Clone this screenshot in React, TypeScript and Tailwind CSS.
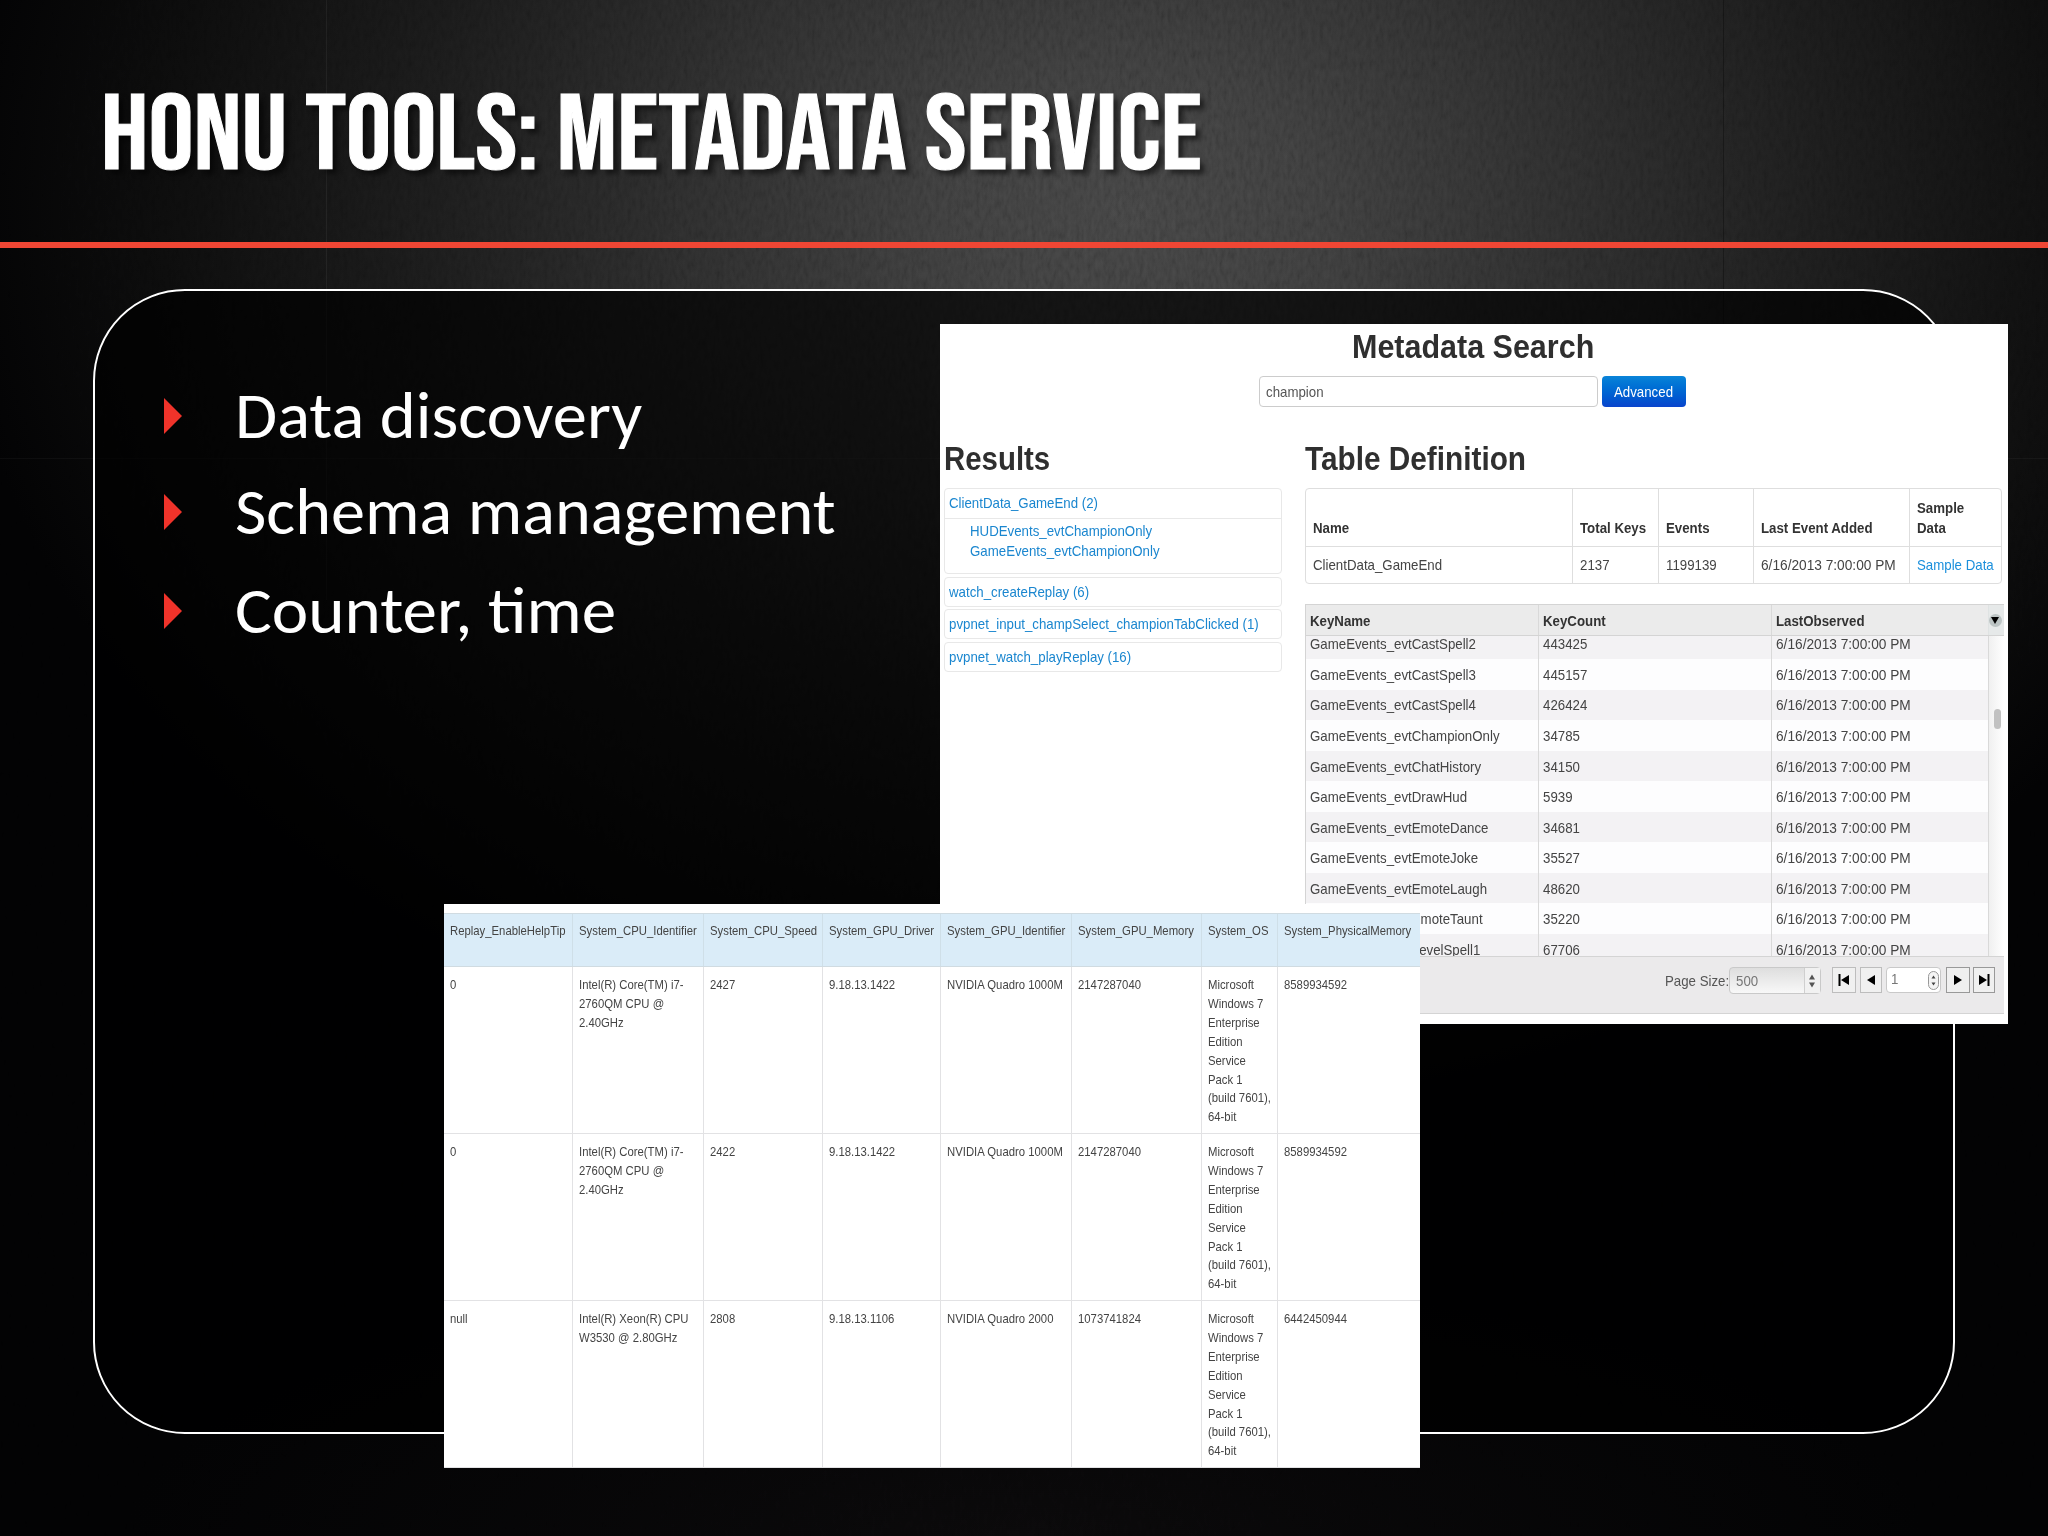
import { useLayoutEffect, useRef, useState } from "react";
import type { ReactNode } from "react";

type FitProps = {
    width: number;
    className?: string;
    children: ReactNode;
};

type KeyRow = {
    name: string;
    count: string;
};

const bullets = [
    { text: "Data discovery", width: 407, row: "h-[95px]" },
    { text: "Schema management", width: 601, row: "h-[98px]" },
    { text: "Counter, time", width: 381, row: "h-[100px]" },
];

const otherResults = [
    "watch_createReplay (6)",
    "pvpnet_input_champSelect_championTabClicked (1)",
    "pvpnet_watch_playReplay (16)",
];

const keyRows: KeyRow[] = [
    { name: "GameEvents_evtCastSpell2", count: "443425" },
    { name: "GameEvents_evtCastSpell3", count: "445157" },
    { name: "GameEvents_evtCastSpell4", count: "426424" },
    { name: "GameEvents_evtChampionOnly", count: "34785" },
    { name: "GameEvents_evtChatHistory", count: "34150" },
    { name: "GameEvents_evtDrawHud", count: "5939" },
    { name: "GameEvents_evtEmoteDance", count: "34681" },
    { name: "GameEvents_evtEmoteJoke", count: "35527" },
    { name: "GameEvents_evtEmoteLaugh", count: "48620" },
    { name: "GameEvents_evtEmoteTaunt", count: "35220" },
    { name: "GameEvents_evtLevelSpell1", count: "67706" },
];

const observed = "6/16/2013 7:00:00 PM";

const sampleHeaders = [
    "Replay_EnableHelpTip",
    "System_CPU_Identifier",
    "System_CPU_Speed",
    "System_GPU_Driver",
    "System_GPU_Identifier",
    "System_GPU_Memory",
    "System_OS",
    "System_PhysicalMemory",
];

const windows7 = [
    "Microsoft",
    "Windows 7",
    "Enterprise",
    "Edition",
    "Service",
    "Pack 1",
    "(build 7601),",
    "64-bit",
];

const i7 = ["Intel(R) Core(TM) i7-", "2760QM CPU @", "2.40GHz"];

const sampleRows: string[][][] = [
    [["0"], i7, ["2427"], ["9.18.13.1422"], ["NVIDIA Quadro 1000M"], ["2147287040"], windows7, ["8589934592"]],
    [["0"], i7, ["2422"], ["9.18.13.1422"], ["NVIDIA Quadro 1000M"], ["2147287040"], windows7, ["8589934592"]],
    [
        ["null"],
        ["Intel(R) Xeon(R) CPU", "W3530 @ 2.80GHz"],
        ["2808"],
        ["9.18.13.1106"],
        ["NVIDIA Quadro 2000"],
        ["1073741824"],
        windows7,
        ["6442450944"],
    ],
];

const sampleGrid = "grid grid-cols-[129px_131px_119px_118px_131px_130px_76px_142px]";

// Squeezes one line of text to a given width.
function Fit({ width, className, children }: FitProps) {
    const ref = useRef<HTMLSpanElement>(null);
    const [scale, setScale] = useState(1);

    useLayoutEffect(() => {
        if (ref.current) setScale(width / ref.current.offsetWidth);
    }, [width]);

    return (
        <span
            ref={ref}
            className={`inline-block origin-left whitespace-nowrap ${className ?? ""}`}
            style={{ transform: `scaleX(${scale})` }}
        >
            {children}
        </span>
    );
}

function Narrow({ children }: { children: ReactNode }) {
    return (
        <span className="inline-block origin-left scale-x-[0.915] whitespace-nowrap">
            {children}
        </span>
    );
}

function Tiny({ children }: { children: ReactNode }) {
    return (
        <span className="block w-max origin-left scale-x-[0.852] whitespace-nowrap">
            {children}
        </span>
    );
}

function Backdrop() {
    return (
        <div className="absolute inset-0 isolate bg-[#020203]">
            <div className="absolute inset-0 bg-[radial-gradient(ellipse_1180px_900px_at_1130px_210px,#414141_0%,#3b3b3b_16%,#2b2b2b_38%,#1a1a1a_60%,#0c0c0c_82%,#020203_100%)]" />
            <div className="absolute inset-x-0 bottom-0 h-[300px] bg-[radial-gradient(ellipse_900px_260px_at_50%_100%,#0a090a_0%,transparent_100%)]" />
            <svg className="absolute inset-0 h-full w-full opacity-20 mix-blend-overlay">
                <filter id="grain" x="0" y="0" width="100%" height="100%">
                    <feTurbulence type="fractalNoise" baseFrequency="0.25 0.1" numOctaves="3" seed="4" />
                    <feColorMatrix values="1 0 0 0 0 1 0 0 0 0 1 0 0 0 0 0 0 0 0 1" />
                </filter>
                <rect width="100%" height="100%" filter="url(#grain)" />
            </svg>
            {/* seams between the wall slabs */}
            <div className="absolute inset-y-0 left-[326px] h-[600px] w-px bg-white/5" />
            <div className="absolute inset-y-0 left-[1723px] h-[600px] w-px bg-black/30" />
            <div className="absolute inset-x-0 top-[458px] h-px bg-white/4" />
        </div>
    );
}

function Bullets() {
    return (
        <ul className="pt-[77px] pl-[69px] font-[Carlito,Calibri,Lato,sans-serif] text-white">
            {bullets.map((b) => (
                <li key={b.text} className={`flex items-center ${b.row}`}>
                    <svg width="18" height="36" viewBox="0 0 18 36" className="mr-[53px]">
                        <path d="M0 0L18 18L0 36Z" fill="#f0332a" />
                    </svg>
                    <Fit width={b.width} className="text-[66px] leading-[72px]">
                        {b.text}
                    </Fit>
                </li>
            ))}
        </ul>
    );
}

function Results() {
    return (
        <div className="w-[338px] text-[#1a86cf]">
            <h2 className="text-[33px] leading-[40px] font-bold text-[#2f2f2f]">
                <Fit width={106}>Results</Fit>
            </h2>
            <div className="mt-[9px] h-[86px] rounded border border-[#e8e8e8]">
                <div className="flex h-[30px] items-center border-b border-[#e8e8e8] pt-px pl-1">
                    <Narrow>ClientData_GameEnd (2)</Narrow>
                </div>
                <div className="flex flex-col pt-0.5 pl-[25px] leading-5">
                    <Narrow>HUDEvents_evtChampionOnly</Narrow>
                    <Narrow>GameEvents_evtChampionOnly</Narrow>
                </div>
            </div>
            {otherResults.map((r) => (
                <div key={r} className="mt-[2.6px] flex h-[30px] items-center rounded border border-[#e8e8e8] pt-0.5 pl-1">
                    <Narrow>{r}</Narrow>
                </div>
            ))}
        </div>
    );
}

function DefinitionTable() {
    const cols = "grid grid-cols-[267px_86px_95px_156px_1fr] divide-x divide-[#dedede]";
    return (
        <div className="mt-[9px] h-[96px] w-[697px] rounded border border-[#dedede]">
            <div className={`${cols} h-[58px] border-b border-[#dedede] leading-5 font-bold text-[#333]`}>
                {["Name", "Total Keys", "Events", "Last Event Added"].map((h) => (
                    <div key={h} className="flex items-end pb-2 pl-[7px]">
                        <Narrow>{h}</Narrow>
                    </div>
                ))}
                <div className="flex flex-col justify-end pb-2 pl-[7px]">
                    <Narrow>Sample</Narrow>
                    <Narrow>Data</Narrow>
                </div>
            </div>
            <div className={`${cols} h-[37px]`}>
                {["ClientData_GameEnd", "2137", "1199139"].map((c) => (
                    <div key={c} className="flex items-center pt-px pl-[7px]">
                        <Narrow>{c}</Narrow>
                    </div>
                ))}
                <div className="flex items-center pt-px pl-[7px]">
                    <Fit width={135}>{observed}</Fit>
                </div>
                <div className="flex items-center pt-px pl-[7px] text-[#1a8fdc]">
                    <Narrow>Sample Data</Narrow>
                </div>
            </div>
        </div>
    );
}

function Pager() {
    const button = "flex h-[26px] items-center justify-center border bg-[#f0f0f0]";
    return (
        <div className="flex h-[58px] items-start border-y border-[#d4d4d4] bg-[#ebeaeb] pt-[10px] pl-[359px]">
            <span className="w-[64px] leading-[28px] text-[#555]">
                <Narrow>Page Size:</Narrow>
            </span>
            <div className="flex h-[27px] w-[92px] rounded border border-[#c9c9c9] bg-linear-to-b from-[#dedede] to-[#f8f8f8]">
                <span className="w-[74px] pl-[6px] leading-[27px] text-[#777]">
                    <Narrow>500</Narrow>
                </span>
                <span className="flex flex-1 items-center justify-center border-l border-[#cfcfcf] bg-[#f1f1f1]">
                    <svg width="6" height="14" viewBox="0 0 6 14" fill="#555">
                        <path d="M3 0.5L6 5.5H0ZM3 13.5L0 8.5H6Z" />
                    </svg>
                </span>
            </div>
            <div className={`${button} ml-[11px] w-6 border-[#bdbdbd]`}>
                <svg width="12" height="12" viewBox="0 0 12 12">
                    <path d="M0.5 0H2.5V12H0.5ZM11 1V11L3 6Z" />
                </svg>
            </div>
            <div className={`${button} ml-1 w-[22px] border-[#bdbdbd]`}>
                <svg width="8" height="10" viewBox="0 0 8 10">
                    <path d="M8 0V10L0 5Z" />
                </svg>
            </div>
            <div className="ml-1 flex h-[26px] w-[55px] items-center justify-between rounded border border-[#c9c9c9] bg-white pr-px pl-1 text-[#777]">
                <Narrow>1</Narrow>
                <span className="flex h-[19px] w-[11px] items-center justify-center rounded-full border border-[#999] bg-[#f4f4f4]">
                    <svg width="5" height="13" viewBox="0 0 5 13" fill="#444">
                        <path d="M2.5 1.5L4.5 4.5H0.5ZM2.5 11.5L0.5 8.5H4.5Z" />
                    </svg>
                </span>
            </div>
            <div className={`${button} ml-[5px] w-6 border-[#999]`}>
                <svg width="8" height="10" viewBox="0 0 8 10">
                    <path d="M0 0V10L8 5Z" />
                </svg>
            </div>
            <div className={`${button} ml-[3px] w-[22px] border-[#999]`}>
                <svg width="12" height="12" viewBox="0 0 12 12">
                    <path d="M11.5 0H9.5V12H11.5ZM1 1V11L9 6Z" />
                </svg>
            </div>
        </div>
    );
}

function KeyGrid() {
    const cols = "grid grid-cols-[233px_233px_1fr] divide-x divide-[#d9d9d9]";
    return (
        <div className="mt-5 w-[699px] border-l border-[#d4d4d4]">
            <div className="flex h-8 border-t border-b border-[#d4d4d4] bg-[#ebebeb] font-bold text-[#333]">
                <div className={`${cols} w-[682px]`}>
                    {["KeyName", "KeyCount", "LastObserved"].map((h) => (
                        <div key={h} className="flex items-center pt-1 pl-[4.5px]">
                            <Narrow>{h}</Narrow>
                        </div>
                    ))}
                </div>
                <div className="flex flex-1 items-center border-l border-[#dfe3e3] bg-[#e6e9e9]">
                    <span className="flex size-[13px] items-center justify-center rounded-full bg-[#bcc4c4]">
                        <svg width="8" height="7" viewBox="0 0 8 7">
                            <path d="M0 0H8L4 7Z" />
                        </svg>
                    </span>
                </div>
            </div>
            <div className="flex h-[320px] overflow-hidden">
                <div className="-mt-[7.5px] w-[682px] shrink-0">
                    {keyRows.map((r, i) => (
                        <div key={r.name} className={`${cols} h-[30.55px] ${i % 2 ? "bg-[#fdfdfe]" : "bg-[#f3f2f4]"}`}>
                            {[r.name, r.count].map((c) => (
                                <div key={c} className="flex items-center pt-[3px] pl-[4.5px]">
                                    <Narrow>{c}</Narrow>
                                </div>
                            ))}
                            <div className="flex items-center pt-[3px] pl-[4.5px]">
                                <Fit width={135}>{observed}</Fit>
                            </div>
                        </div>
                    ))}
                </div>
                <div className="flex-1 border-l border-[#d9d9d9] bg-linear-to-r from-[#f0f0f0] to-white pt-[73px] pl-[5px]">
                    <div className="h-5 w-[7px] rounded-full bg-[#c1c1c1]" />
                </div>
            </div>
            <Pager />
        </div>
    );
}

function SearchPanel() {
    return (
        <div className="absolute top-[324px] left-[940px] h-[700px] w-[1068px] bg-white font-['Liberation_Sans',Arial,sans-serif] text-[14.5px] text-[#444]">
            <h1 className="pt-[3px] pl-[412px] text-[33px] leading-[40px] font-bold text-[#2f2f2f]">
                <Fit width={242}>Metadata Search</Fit>
            </h1>
            <div className="flex pt-[9px] pl-[319px]">
                <div className="h-[31px] w-[339px] rounded border border-[#ccc] pl-1.5 leading-[30px] text-[#555]">
                    <Narrow>champion</Narrow>
                </div>
                <div className="ml-1 h-[31px] w-[84px] rounded bg-linear-to-b from-[#0a84d8] to-[#0a44cc] pl-3 leading-[32px] text-white">
                    <Narrow>Advanced</Narrow>
                </div>
            </div>
            <div className="flex pt-[32px] pl-1">
                <Results />
                <div className="ml-[22.6px]">
                    <h2 className="text-[33px] leading-[40px] font-bold text-[#2f2f2f]">
                        <Fit width={221}>Table Definition</Fit>
                    </h2>
                    <DefinitionTable />
                    <KeyGrid />
                </div>
            </div>
        </div>
    );
}

function SamplePanel() {
    return (
        <div className="absolute top-[904px] left-[444px] h-[564px] w-[976px] bg-white pt-[9px] font-['Liberation_Sans',Arial,sans-serif] text-[13.3px] leading-[18.9px] text-[#444]">
            <div className={`${sampleGrid} h-[54px] divide-x divide-[#cfdfe8] border-t border-b border-[#d0dbe1] bg-[#daecf8]`}>
                {sampleHeaders.map((h) => (
                    <div key={h} className="pt-2 pl-1.5">
                        <Tiny>{h}</Tiny>
                    </div>
                ))}
            </div>
            {sampleRows.map((row, i) => (
                <div key={i} className={`${sampleGrid} h-[167px] divide-x divide-[#e2e2e4] border-b border-[#e2e2e4]`}>
                    {row.map((lines, j) => (
                        <div key={j} className="pt-[9px] pl-1.5">
                            {lines.map((line) => (
                                <Tiny key={line}>{line}</Tiny>
                            ))}
                        </div>
                    ))}
                </div>
            ))}
        </div>
    );
}

export default function App() {
    return (
        <div className="relative h-[1536px] w-[2048px] overflow-hidden">
            <Backdrop />
            <main className="relative">
                <header className="h-[248px] border-b-[6px] border-[#ef4634] pt-[73px] pl-[101px]">
                    <h1 className="font-['Bebas_Neue','Roboto_Condensed',Roboto,sans-serif] text-[107px] leading-[128px] font-normal text-white [-webkit-text-stroke:1px_white] [text-shadow:5px_5px_5px_rgba(0,0,0,0.5)]">
                        <Fit width={1101}>HONU TOOLS: METADATA SERVICE</Fit>
                    </h1>
                </header>
                <section className="mt-[41px] ml-[93px] h-[1145px] w-[1862px] rounded-[92px] border-2 border-white bg-black/70">
                    <Bullets />
                </section>
            </main>
            <SearchPanel />
            <SamplePanel />
        </div>
    );
}
